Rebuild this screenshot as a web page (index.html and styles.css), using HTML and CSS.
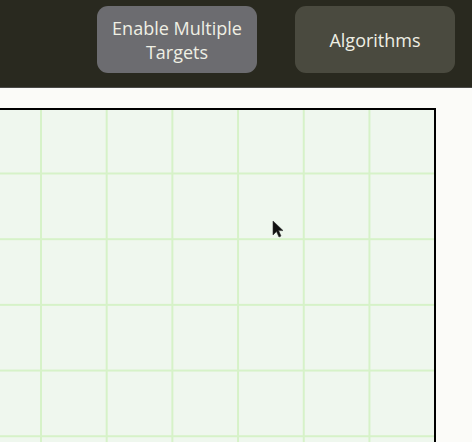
FILE: index.html
```html
<!DOCTYPE html>
<html>
<head>
<meta charset="utf-8">
<link rel="stylesheet" href="styles.css">
</head>
<body>
<header class="toolbar">
  <button class="btn btn-light">Enable Multiple<br>Targets</button>
  <button class="btn btn-dark">Algorithms</button>
</header>
<main class="stage">
  <div class="grid">
    <svg class="cursor" width="12" height="18" viewBox="0 0 12 18">
      <path d="M1 1 L1 15 L4.5 11.5 L7 17 L9 16 L6.6 10.6 L11 10.6 Z" fill="#111" stroke="#333" stroke-width="0.6"/>
    </svg>
  </div>
</main>
</body>
</html>
```
FILE: styles.css
```css
html, body {
  margin: 0;
  padding: 0;
}
body {
  background: #fbfbf8;
  width: 472px;
  height: 442px;
  overflow: hidden;
  font-family: "Open Sans", "Noto Sans", sans-serif;
}
.toolbar {
  height: 88px;
  background: #29291f;
  border-bottom: 1px solid #4a4a48;
  display: flex;
  justify-content: flex-end;
  align-items: flex-start;
  gap: 38px;
  padding: 6px 17px 0 0;
  box-sizing: border-box;
}
.btn {
  width: 160px;
  height: 67px;
  border: none;
  border-radius: 11px;
  color: #efefe4;
  font-family: "Open Sans", "Noto Sans", sans-serif;
  font-size: 18px;
  line-height: 24px;
  padding: 0;
}
.btn-light {
  background: #6c6c70;
}
.btn-dark {
  background: #4a4a3f;
}
.stage {
  padding-top: 20px;
}
.grid {
  position: relative;
  margin-left: -27px;
  width: 463px;
  height: 400px;
  border: 2px solid #000;
  box-sizing: border-box;
  background-color: #eff7ee;
  background-image:
    linear-gradient(to right, #d6f2c8 0, #d6f2c8 2px, transparent 2px),
    linear-gradient(to bottom, #d6f2c8 0, #d6f2c8 2px, transparent 2px);
  background-size: 65.7px 65.7px;
  background-position: 65px 62.5px;
}
.cursor {
  position: absolute;
  left: 297px;
  top: 110px;
}
```
